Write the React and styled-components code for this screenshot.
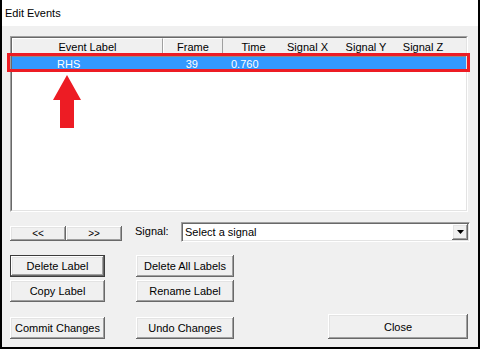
import React from "react";
import styled, { createGlobalStyle, css } from "styled-components";

const GlobalStyle = createGlobalStyle`
  html, body {
    margin: 0;
    padding: 0;
    background: #f0f0f0;
  }
  body {
    font-family: "Liberation Sans", Arial, sans-serif;
    font-size: 11px;
    color: #000;
  }
`;

// Classic raised 3D edge used by buttons and header cells
const raised = css`
  box-shadow: inset -1px -1px #696969, inset 1px 1px #ffffff,
    inset -2px -2px #a0a0a0, inset 2px 2px #e3e3e3;
`;

const columns = [
  { key: "label", title: "Event Label", width: 151, raised: true },
  { key: "frame", title: "Frame", width: 60, raised: true },
  { key: "time", title: "Time", width: 61 },
  { key: "x", title: "Signal X", width: 47 },
  { key: "y", title: "Signal Y", width: 70 },
  { key: "z", title: "Signal Z", width: 44 },
];

const events = [{ label: "RHS", frame: "39", time: "0.760" }];

const App = () => {
  return (
    <>
      <GlobalStyle />
      <Window>
        <TitleBar>Edit Events</TitleBar>
        <Body>
          <ListFrame>
            <ListInner>
              <HeaderRow>
                {columns.map((col) => (
                  <HeaderCell key={col.key} $width={col.width} $raised={col.raised}>
                    {col.title}
                  </HeaderCell>
                ))}
                <HeaderFill />
              </HeaderRow>
              {events.map((ev) => (
                <DataRow key={ev.label} $selected>
                  <DataCell $width={151} $padLeft={45}>
                    {ev.label}
                  </DataCell>
                  <DataCell $width={60} $align="right" $padRight={25}>
                    {ev.frame}
                  </DataCell>
                  <DataCell $width={61} $padLeft={8}>
                    {ev.time}
                  </DataCell>
                </DataRow>
              ))}
            </ListInner>
            <Highlight />
            <Arrow width="28" height="53" viewBox="0 0 28 53">
              <polygon points="14,0 28,25 21,25 21,53 7,53 7,25 0,25" fill="#ed1c24" />
            </Arrow>
          </ListFrame>

          <ControlRow>
            <NavGroup>
              <NavButton>&lt;&lt;</NavButton>
              <NavButton>&gt;&gt;</NavButton>
            </NavGroup>
            <SignalLabel>Signal:</SignalLabel>
            <SelectBox>
              <SelectText>Select a signal</SelectText>
              <DropButton>
                <svg width="7" height="4" viewBox="0 0 7 4">
                  <polygon points="0,0 7,0 3.5,4" fill="#000" />
                </svg>
              </DropButton>
            </SelectBox>
          </ControlRow>

          <ActionGrid>
            <ActionButton $default>Delete Label</ActionButton>
            <ActionButton>Copy Label</ActionButton>
            <ActionButton $bottom>Commit Changes</ActionButton>
            <ActionButton>Delete All Labels</ActionButton>
            <ActionButton>Rename Label</ActionButton>
            <ActionButton $bottom>Undo Changes</ActionButton>
            <CloseButton>Close</CloseButton>
          </ActionGrid>
        </Body>
      </Window>
    </>
  );
};

const Window = styled.div`
  width: 480px;
  height: 349px;
  box-sizing: border-box;
  border: 2px solid #000;
  border-top: none;
  display: flex;
  flex-direction: column;
  background: #f0f0f0;
`;

const TitleBar = styled.div`
  height: 26px;
  flex: 0 0 26px;
  background: #ffffff;
  display: flex;
  align-items: center;
  padding-left: 3px;
  font-size: 11px;
`;

const Body = styled.div`
  flex: 1;
  padding: 10px 0 0 8px;
  display: flex;
  flex-direction: column;
`;

const ListFrame = styled.div`
  position: relative;
  width: 458px;
  height: 176px;
  box-sizing: border-box;
  border: 1px solid;
  border-color: #a0a0a0 #ffffff #ffffff #a0a0a0;
`;

const ListInner = styled.div`
  height: 100%;
  box-sizing: border-box;
  border: 1px solid;
  border-color: #696969 #e3e3e3 #e3e3e3 #696969;
  background: #ffffff;
  overflow: hidden;
`;

const HeaderRow = styled.div`
  display: flex;
  height: 19px;
  box-sizing: border-box;
  border-bottom: 1px solid #8a8a8a;
  background: #f0f0f0;
`;

const HeaderCell = styled.div`
  flex: 0 0 ${(p) => p.$width}px;
  display: flex;
  align-items: center;
  justify-content: center;
  padding-bottom: 1px;
  box-sizing: border-box;
  white-space: nowrap;
  ${(p) =>
    p.$raised &&
    css`
      border-left: 1px solid #ffffff;
      border-top: 1px solid #ffffff;
      border-right: 1px solid #a0a0a0;
    `}
`;

const HeaderFill = styled.div`
  flex: 1;
`;

const DataRow = styled.div`
  display: flex;
  height: 14px;
  line-height: 14px;
  background: ${(p) => (p.$selected ? "#3399ff" : "transparent")};
  color: ${(p) => (p.$selected ? "#ffffff" : "#000000")};
`;

const DataCell = styled.div`
  flex: 0 0 ${(p) => p.$width}px;
  box-sizing: border-box;
  text-align: ${(p) => p.$align || "left"};
  padding-left: ${(p) => p.$padLeft || 0}px;
  padding-right: ${(p) => p.$padRight || 0}px;
  white-space: nowrap;
`;

const Highlight = styled.div`
  position: absolute;
  left: -4px;
  top: 16px;
  width: 463px;
  height: 19px;
  box-sizing: border-box;
  border: 3px solid #ed1c24;
  pointer-events: none;
`;

const Arrow = styled.svg`
  position: absolute;
  left: 42px;
  top: 38px;
  display: block;
`;

const ControlRow = styled.div`
  margin-top: 10px;
  height: 20px;
  display: flex;
  align-items: center;
`;

const NavGroup = styled.div`
  display: flex;
  align-self: flex-end;
  margin-bottom: 1px;
`;

const NavButton = styled.div`
  width: 56px;
  height: 15px;
  box-sizing: border-box;
  display: flex;
  align-items: center;
  justify-content: center;
  background: #f0f0f0;
  font-size: 10px;
  ${raised}
`;

const SignalLabel = styled.div`
  flex: 0 0 46px;
  margin-left: 13px;
  margin-bottom: 3px;
`;

const SelectBox = styled.div`
  width: 289px;
  height: 20px;
  box-sizing: border-box;
  border: 1px solid;
  border-color: #a0a0a0 #ffffff #ffffff #a0a0a0;
  display: flex;
  background: #ffffff;
  box-shadow: inset 1px 1px #696969, inset -1px -1px #e3e3e3;
  padding: 1px;
`;

const SelectText = styled.div`
  flex: 1;
  display: flex;
  align-items: center;
  padding-left: 2px;
`;

const DropButton = styled.div`
  width: 16px;
  height: 16px;
  box-sizing: border-box;
  display: flex;
  align-items: center;
  justify-content: center;
  background: #f0f0f0;
  ${raised}
`;

const ActionGrid = styled.div`
  margin-top: 13px;
  width: 458px;
  display: grid;
  grid-template-columns: 95px 98px 1fr;
  grid-template-rows: 22px 22px 34px;
  grid-auto-flow: column;
  column-gap: 31px;
  row-gap: 3px;
`;

const buttonBase = css`
  box-sizing: border-box;
  display: flex;
  align-items: center;
  justify-content: center;
  background: #f0f0f0;
  white-space: nowrap;
  ${raised}
`;

const ActionButton = styled.div`
  ${buttonBase}
  height: 22px;
  align-self: ${(p) => (p.$bottom ? "end" : "stretch")};
  ${(p) =>
    p.$default &&
    css`
      border: 1px solid #3c3c3c;
    `}
`;

const CloseButton = styled.div`
  ${buttonBase}
  grid-row: 3;
  grid-column: 3;
  width: 140px;
  height: 25px;
  justify-self: end;
  align-self: end;
`;

export default App;
